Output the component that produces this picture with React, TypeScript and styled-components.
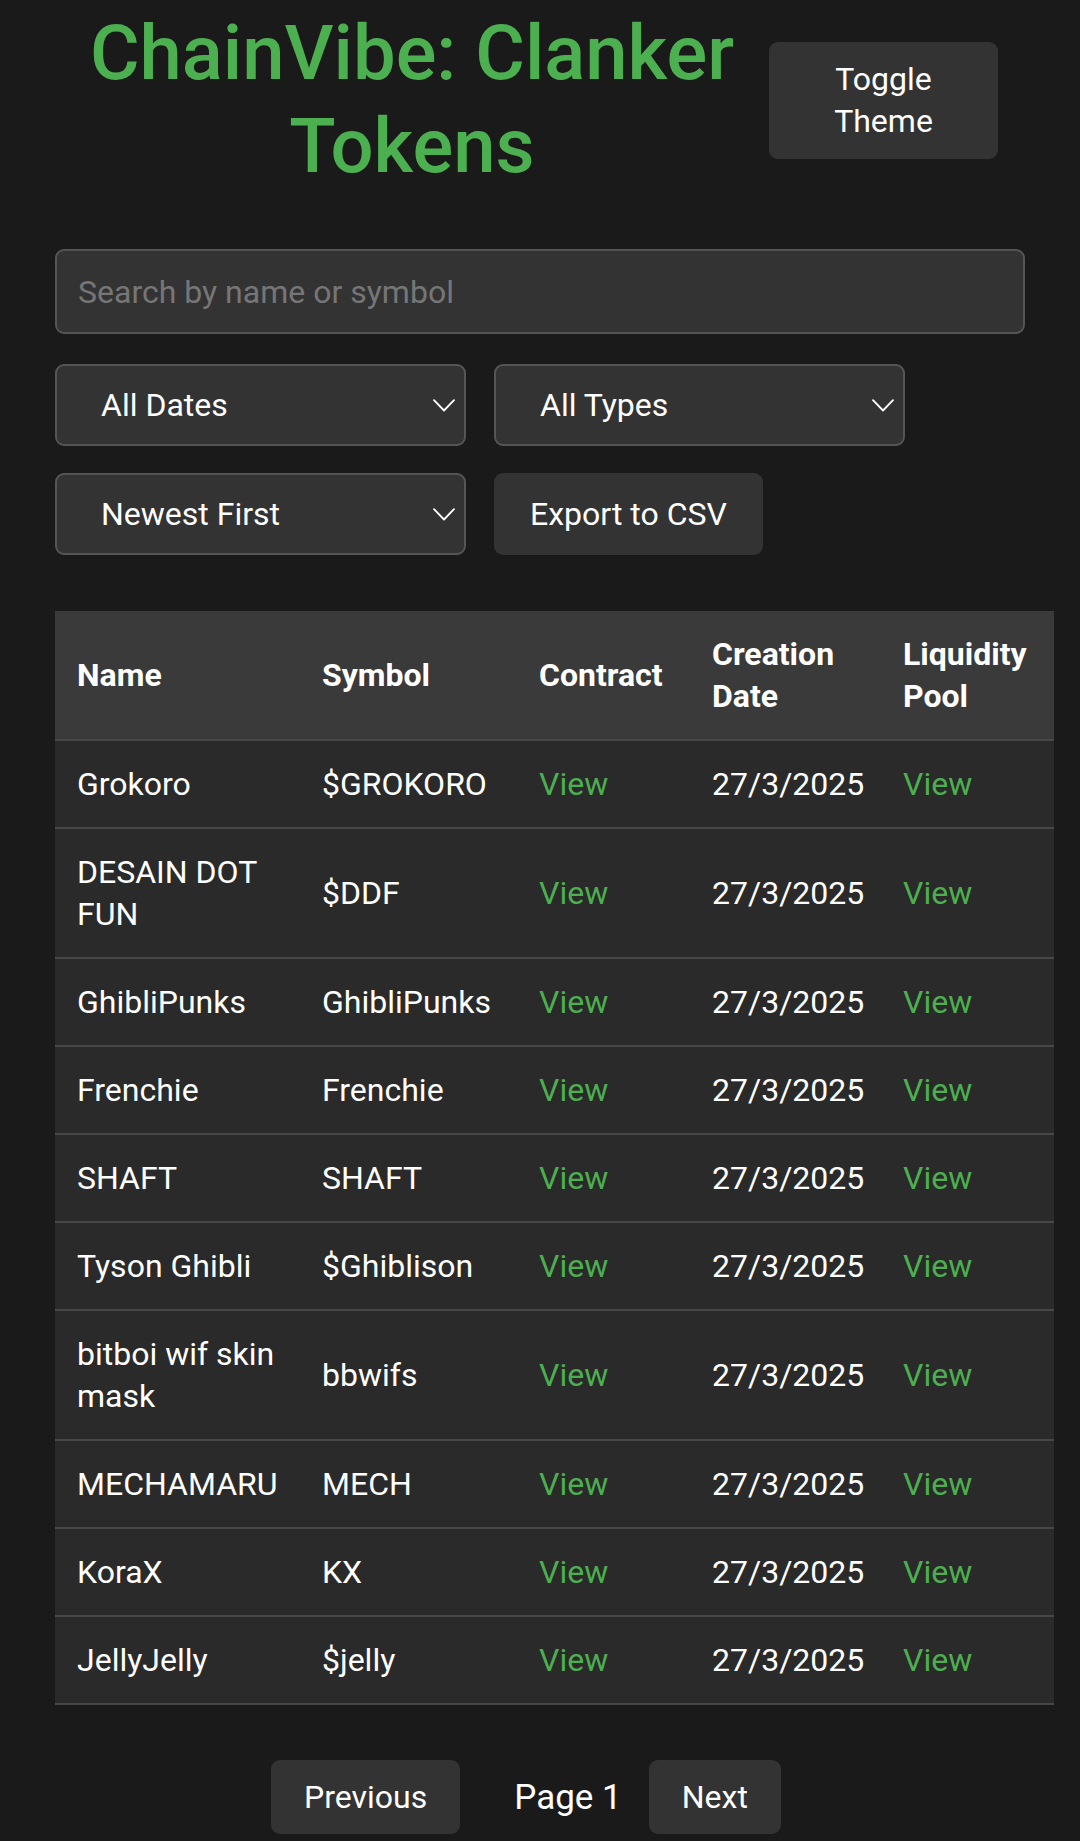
import React from "react";
import styled, { createGlobalStyle } from "styled-components";

const GlobalStyle = createGlobalStyle`
  html, body {
    margin: 0;
    padding: 0;
    background: #1a1a1a;
  }
  body {
    font-family: Roboto, "Liberation Sans", Arial, sans-serif;
    color: #ffffff;
  }
  * { box-sizing: border-box; }
`;

const Page = styled.div`
  padding: 7px 55px 40px 55px;
  background: #1a1a1a;
  min-height: 1841px;
`;

const Header = styled.header`
  display: flex;
  align-items: center;
  padding-right: 27px;
  margin-bottom: 56px;
`;

const Title = styled.h1`
  flex: 1;
  margin: 0;
  text-align: center;
  color: #4caf50;
  font-size: 76px;
  line-height: 93px;
  font-weight: 500;
`;

const ToggleButton = styled.button`
  flex: none;
  width: 229px;
  height: 117px;
  padding: 0 30px;
  border: none;
  border-radius: 9px;
  background: #333333;
  color: #ffffff;
  font-family: inherit;
  font-size: 32px;
  line-height: 42px;
  text-align: center;
`;

const SearchInput = styled.input`
  display: block;
  width: 100%;
  height: 85px;
  margin: 0 0 30px 0;
  padding: 0 21px;
  border: 2px solid #555555;
  border-radius: 9px;
  background: #333333;
  color: #ffffff;
  font-family: inherit;
  font-size: 32px;
  outline: none;
  &::placeholder {
    color: #767676;
  }
`;

const ControlRow = styled.div<{ $mb: number }>`
  display: flex;
  gap: 28px;
  margin-bottom: ${(p) => p.$mb}px;
`;

const SelectBox = styled.div`
  display: flex;
  align-items: center;
  justify-content: space-between;
  width: 411px;
  height: 82px;
  padding: 0 9px 0 44px;
  border: 2px solid #555555;
  border-radius: 9px;
  background: #333333;
  color: #ffffff;
  font-size: 32px;
`;

const ActionButton = styled.button`
  height: 82px;
  padding: 0 36px;
  border: none;
  border-radius: 9px;
  background: #333333;
  color: #ffffff;
  font-family: inherit;
  font-size: 32px;
`;

const Table = styled.table`
  width: 999px;
  table-layout: fixed;
  border-collapse: collapse;
  background: #2a2a2a;
`;

const HeadRow = styled.tr`
  background: #3a3a3a;
`;

const Th = styled.th`
  padding: 22px;
  text-align: left;
  font-size: 32px;
  line-height: 42px;
  font-weight: 700;
  color: #ffffff;
  border-bottom: 2px solid #474747;
  vertical-align: middle;
`;

const Td = styled.td`
  padding: 22px;
  font-size: 32px;
  line-height: 42px;
  color: #ffffff;
  border-bottom: 2px solid #474747;
  vertical-align: middle;
`;

const Link = styled.a`
  color: #4caf50;
  text-decoration: none;
`;

const Pagination = styled.div`
  display: flex;
  align-items: center;
  justify-content: center;
  margin-top: 55px;
  padding-right: 28px;
`;

const PageButton = styled.button<{ $ml?: number; $mr?: number }>`
  height: 74px;
  padding: 0 33px;
  margin-left: ${(p) => p.$ml ?? 0}px;
  margin-right: ${(p) => p.$mr ?? 0}px;
  border: none;
  border-radius: 9px;
  background: #333333;
  color: #ffffff;
  font-family: inherit;
  font-size: 32px;
`;

const PageLabel = styled.span`
  font-size: 35px;
  color: #ffffff;
`;

const Chevron = () => (
  <svg width="22" height="13" viewBox="0 0 22 13" fill="none">
    <path d="M1 1.2 L11 11.5 L21 1.2" stroke="#ffffff" strokeWidth="1.8" strokeLinecap="round" strokeLinejoin="round" />
  </svg>
);

const tokens = [
  { name: "Grokoro", symbol: "$GROKORO" },
  { name: "DESAIN DOT FUN", symbol: "$DDF" },
  { name: "GhibliPunks", symbol: "GhibliPunks" },
  { name: "Frenchie", symbol: "Frenchie" },
  { name: "SHAFT", symbol: "SHAFT" },
  { name: "Tyson Ghibli", symbol: "$Ghiblison" },
  { name: "bitboi wif skin mask", symbol: "bbwifs" },
  { name: "MECHAMARU", symbol: "MECH" },
  { name: "KoraX", symbol: "KX" },
  { name: "JellyJelly", symbol: "$jelly" },
];

const colWidths = [245, 217, 173, 191, 173];

export default function App() {
  return (
    <>
      <GlobalStyle />
      <Page>
        <Header>
          <Title>ChainVibe: Clanker Tokens</Title>
          <ToggleButton>Toggle Theme</ToggleButton>
        </Header>

        <SearchInput placeholder="Search by name or symbol" />

        <ControlRow $mb={27}>
          <SelectBox>
            <span>All Dates</span>
            <Chevron />
          </SelectBox>
          <SelectBox>
            <span>All Types</span>
            <Chevron />
          </SelectBox>
        </ControlRow>
        <ControlRow $mb={56}>
          <SelectBox>
            <span>Newest First</span>
            <Chevron />
          </SelectBox>
          <ActionButton>Export to CSV</ActionButton>
        </ControlRow>

        <Table>
          <colgroup>
            {colWidths.map((w, i) => (
              <col key={i} style={{ width: w }} />
            ))}
          </colgroup>
          <thead>
            <HeadRow>
              <Th>Name</Th>
              <Th>Symbol</Th>
              <Th>Contract</Th>
              <Th>Creation Date</Th>
              <Th>Liquidity Pool</Th>
            </HeadRow>
          </thead>
          <tbody>
            {tokens.map((t) => (
              <tr key={t.name}>
                <Td>{t.name}</Td>
                <Td>{t.symbol}</Td>
                <Td>
                  <Link href="#">View</Link>
                </Td>
                <Td>27/3/2025</Td>
                <Td>
                  <Link href="#">View</Link>
                </Td>
              </tr>
            ))}
          </tbody>
        </Table>

        <Pagination>
          <PageButton $mr={54}>Previous</PageButton>
          <PageLabel>Page 1</PageLabel>
          <PageButton $ml={27}>Next</PageButton>
        </Pagination>
      </Page>
    </>
  );
}
